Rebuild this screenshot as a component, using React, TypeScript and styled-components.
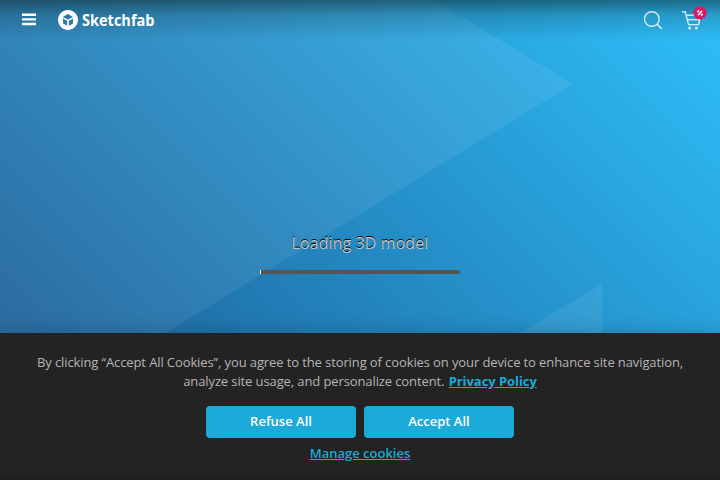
import React from "react";
import styled, { createGlobalStyle } from "styled-components";
import { SiSketchfab } from "react-icons/si";

const GlobalStyle = createGlobalStyle`
  * { box-sizing: border-box; }
  html, body { margin: 0; padding: 0; overflow: hidden; }
  body { font-family: "Open Sans", "Noto Sans", sans-serif; }
`;

const Page = styled.div`
  position: relative;
  width: 720px;
  height: 480px;
  overflow: hidden;
  display: flex;
  flex-direction: column;
  background: linear-gradient(45deg, #1a538b, #2ec0fa);
`;

const Backdrop = styled.svg`
  position: absolute;
  inset: 0;
`;

const Header = styled.header`
  position: relative;
  flex: none;
  height: 40px;
  padding: 0 12px 0 22px;
  display: flex;
  align-items: center;
  background: linear-gradient(to bottom, rgba(10, 25, 25, 0.5), rgba(10, 25, 25, 0.2) 38%, rgba(10, 25, 25, 0));
`;

const Menu = styled.button`
  width: 14px;
  height: 40px;
  padding: 0;
  border: 0;
  background: none;
  display: flex;
`;

const Logo = styled.a`
  display: flex;
  align-items: center;
  gap: 4px;
  margin-left: 22px;
  color: #fff;
`;

const WordMark = styled.text`
  font: 700 16.5px "Open Sans", sans-serif;
  fill: #fff;
`;

const Actions = styled.nav`
  margin-left: auto;
  display: flex;
  align-items: flex-start;
  height: 40px;
  padding-top: 5px;
  gap: 14px;
`;

const Loader = styled.main`
  position: relative;
  flex: 1;
  display: flex;
  flex-direction: column;
  align-items: center;
  padding-top: 191px;
`;

const LoaderText = styled.div`
  height: 24px;
  line-height: 24px;
  font-size: 16px;
  font-weight: 400;
  letter-spacing: 0.08px;
  color: #c4c4c4;
  text-shadow: 0 -1px 0 #000;
  white-space: nowrap;
`;

const Track = styled.div`
  margin-top: 15px;
  width: 200px;
  height: 4px;
  border-radius: 0 2px 2px 0;
  overflow: hidden;
  background: #555;
`;

const Progress = styled.div`
  width: 1px;
  height: 4px;
  background: #fff;
`;

const Banner = styled.section`
  position: relative;
  flex: none;
  height: 147px;
  padding-top: 20px;
  display: flex;
  flex-direction: column;
  align-items: center;
  background: #232323;
  border-bottom: 4px solid #211d1e;
  box-shadow: 0 0 18px rgba(0, 0, 0, 0.2);
`;

const Notice = styled.p`
  margin: 0;
  width: 660px;
  text-align: center;
  font-size: 13px;
  line-height: 19px;
  letter-spacing: -0.107px;
  color: #b5b5b5;
`;

const PolicyLink = styled.a`
  margin-left: 1px;
  font-weight: 700;
  letter-spacing: -0.06px;
  color: #1caad9;
  text-decoration: underline;
`;

const Buttons = styled.div`
  display: flex;
  gap: 8px;
  margin-top: 15px;
`;

const Button = styled.button`
  width: 150px;
  height: 32px;
  padding: 0 0 2px;
  border: 0;
  border-radius: 4px;
  background: #1caad9;
  color: #fff;
  font: 600 13px "Open Sans", sans-serif;
`;

const Manage = styled.a`
  margin-top: 5px;
  font-size: 13px;
  line-height: 20px;
  font-weight: 600;
  color: #1caad9;
  text-decoration: underline;
`;

export default function App() {
  return (
    <Page>
      <GlobalStyle />
      <Backdrop width="720" height="480" viewBox="0 0 720 480">
        <path d="M0 0H434L573 84L0 434Z" fill="#fff" fillOpacity=".07" />
        <path d="M602 284V480H275Z" fill="#fff" fillOpacity=".07" />
      </Backdrop>
      <Header>
        <Menu aria-label="Menu">
          <svg width="14" height="40" viewBox="0 0 14 40" stroke="#fff" strokeWidth="2.4">
            <path d="M0 14.8H14M0 19.4H14M0 24H14" />
          </svg>
        </Menu>
        <Logo aria-label="Sketchfab">
          <SiSketchfab size={20} />
          <svg width="92" height="32" viewBox="0 0 92 32">
            <WordMark x="0" y="22" textLength="72.5" lengthAdjust="spacingAndGlyphs">Sketchfab</WordMark>
          </svg>
        </Logo>
        <Actions>
          <svg width="26" height="28" viewBox="0 0 26 28" fill="none" stroke="#fff" strokeOpacity=".8" strokeWidth="1.4">
            <circle cx="11.8" cy="14" r="7.3" />
            <path d="M17 19.2L21.8 24" strokeWidth="1.7" />
          </svg>
          <svg width="28" height="28" viewBox="0 0 28 28" fill="none">
            <g stroke="#fff" strokeOpacity=".8" strokeWidth="1.4">
              <path d="M2 6.7H5.2L8.6 19.6H18.6L20.8 10.3H6.2" />
              <path d="M7.2 14.7H20" />
            </g>
            <circle cx="9.6" cy="23" r="1.5" fill="#fff" fillOpacity=".8" />
            <circle cx="16.5" cy="23" r="1.5" fill="#fff" fillOpacity=".8" />
            <circle cx="20" cy="8" r="6.2" fill="#e01563" />
            <circle cx="20" cy="8" r="6.4" stroke="#e01563" strokeWidth="1.1" strokeDasharray="2.1 1.8" />
            <path d="M17.9 10.3L22.1 5.7" stroke="#fff" strokeWidth="1.3" />
            <circle cx="18.3" cy="6.4" r="1.1" fill="#fff" />
            <circle cx="21.7" cy="9.7" r="1.1" fill="#fff" />
          </svg>
        </Actions>
      </Header>
      <Loader>
        <LoaderText>Loading 3D model</LoaderText>
        <Track>
          <Progress />
        </Track>
      </Loader>
      <Banner>
        <Notice>
          By clicking “Accept All Cookies”, you agree to the storing of cookies on your device to enhance site
          navigation, analyze site usage, and personalize content.{" "}
          <PolicyLink>Privacy Policy</PolicyLink>
        </Notice>
        <Buttons>
          <Button>Refuse All</Button>
          <Button>Accept All</Button>
        </Buttons>
        <Manage>Manage cookies</Manage>
      </Banner>
    </Page>
  );
}
